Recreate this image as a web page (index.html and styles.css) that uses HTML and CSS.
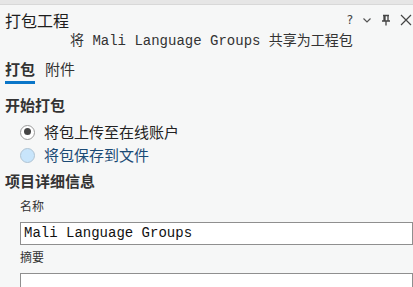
FILE: index.html
```html
<!DOCTYPE html>
<html lang="zh">
<head>
<meta charset="utf-8">
<link rel="stylesheet" href="styles.css">
</head>
<body>
<div class="pane">
  <div class="strip"></div>
  <div class="header">
    <div class="title">打包工程</div>
    <div class="controls">
      <span class="help">?</span>
      <svg width="10" height="8" viewBox="0 0 10 8"><path d="M1.5 2.5 L5 6 L8.5 2.5" fill="none" stroke="#555" stroke-width="1.2"/></svg>
      <svg width="10" height="12" viewBox="0 0 10 12"><path d="M2 1.5 H8 M3 1.5 V7 M7 1.5 V7 M1 7 H9 M5 7 V11.5 M4 2 V6.5" fill="none" stroke="#444" stroke-width="1.3"/></svg>
      <svg width="12" height="12" viewBox="0 0 12 12"><path d="M1 1 L11 11 M11 1 L1 11" fill="none" stroke="#444" stroke-width="1.2"/></svg>
    </div>
  </div>
  <div class="subtitle">将 Mali Language Groups 共享为工程包</div>
  <div class="tabs">
    <div class="tab active">打包</div>
    <div class="tab">附件</div>
  </div>
  <div class="section">开始打包</div>
  <div class="radios">
    <label class="radio"><span class="dot checked"></span><span>将包上传至在线账户</span></label>
    <label class="radio hover"><span class="dot"></span><span>将包保存到文件</span></label>
  </div>
  <div class="section details">项目详细信息</div>
  <div class="field">
    <div class="label">名称</div>
    <div class="input">Mali Language Groups</div>
    <div class="label">摘要</div>
    <div class="input"></div>
  </div>
</div>
</body>
</html>
```
FILE: styles.css
```css
html, body {
  margin: 0;
  padding: 0;
  background: #f6f7f7;
  overflow: hidden;
}
body {
  font-family: "Noto Sans CJK SC", "Noto Sans", sans-serif;
  color: #222;
}
.pane {
  width: 413px;
  height: 287px;
}
.strip {
  height: 4px;
  background: #e6e6e6;
  border-bottom: 1px solid #d8d8d8;
}
.header {
  display: flex;
  justify-content: space-between;
  align-items: center;
  height: 26px;
  padding: 2px 0 0 5px;
}
.title {
  font-size: 16px;
  line-height: 26px;
  color: #1e1e1e;
}
.controls {
  display: flex;
  align-items: center;
  gap: 9px;
  padding-right: 1px;
}
.help {
  font-family: "DejaVu Sans", sans-serif;
  font-size: 12px;
  color: #444;
}
.subtitle {
  font-family: "Liberation Mono", "Noto Sans CJK SC", monospace;
  font-size: 14px;
  line-height: 18px;
  color: #333;
  padding-left: 70px;
  margin-top: -1px;
}
.tabs {
  display: flex;
  gap: 10px;
  padding-left: 5px;
  margin-top: 9px;
}
.tab {
  font-size: 15px;
  line-height: 20px;
  padding-bottom: 2px;
  color: #333;
  border-bottom: 3px solid transparent;
}
.tab.active {
  font-weight: 700;
  border-bottom-color: #0a76c8;
}
.section {
  font-size: 15px;
  font-weight: 700;
  line-height: 20px;
  color: #333;
  padding-left: 5px;
  margin-top: 11px;
}
.radios {
  display: flex;
  flex-direction: column;
  gap: 3px;
  padding-left: 20px;
  margin-top: 7px;
}
.radio {
  display: flex;
  align-items: center;
  gap: 9px;
  font-size: 15px;
  line-height: 20px;
  color: #222;
}
.dot {
  box-sizing: border-box;
  width: 15px;
  height: 15px;
  border-radius: 50%;
  border: 1.5px solid #9a9a9a;
  background: #fff;
  position: relative;
}
.dot.checked::after {
  content: "";
  position: absolute;
  left: 2.5px;
  top: 2.5px;
  width: 7px;
  height: 7px;
  border-radius: 50%;
  background: #454545;
}
.radio.hover {
  color: #1a4a75;
}
.radio.hover .dot {
  background: #c8e5fb;
  border-color: #b0c4d3;
}
.details {
  margin-top: 6px;
}
.field {
  padding-left: 20px;
  margin-top: 6px;
}
.label {
  font-size: 12px;
  line-height: 18px;
  color: #333;
}
.input {
  margin-top: 7px;
  margin-bottom: 3px;
  height: 21px;
  border: 1px solid #8f8f8f;
  background: #fff;
  font-family: "Liberation Mono", monospace;
  font-size: 14px;
  line-height: 21px;
  padding-left: 3px;
  color: #111;
}
```
